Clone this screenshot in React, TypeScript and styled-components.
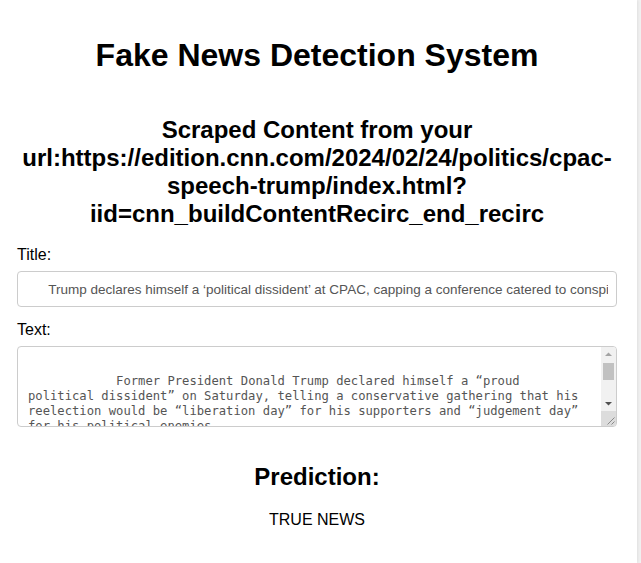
import React from "react";
import styled, { createGlobalStyle } from "styled-components";

const GlobalStyle = createGlobalStyle`
  html, body {
    margin: 0;
    padding: 0;
    background-color: #f1f1f1;
    font-family: "Liberation Sans", Arial, sans-serif;
  }
`;

const scrapedTitle =
  "      Trump declares himself a \u2018political dissident\u2019 at CPAC, capping a conference catered to conspiracy theories";

const scrapedText = [
  "",
  "            Former President Donald Trump declared himself a \u201cproud",
  "political dissident\u201d on Saturday, telling a conservative gathering that his",
  "reelection would be \u201cliberation day\u201d for his supporters and \u201cjudgement day\u201d",
  "for his political enemies.",
  "",
  "            \u201cI stand before you today not only as your past and",
  "future president, but as a proud political dissident,\u201d Trump said.",
  "",
  "            The speech capped a conference catered to conspiracy",
  "theories.",
].join("\n");

// the browser hides real scrollbars in the screenshot, so draw one over the textarea
const FakeScrollbar = () => (
  <>
    <STrack>
      <SArrowButton>
        <svg width="15" height="15" viewBox="0 0 15 15">
          <polygon points="4,9 11,9 7.5,5.5" fill="#a3a3a3" />
        </svg>
      </SArrowButton>
      <SThumb />
      <SSpacer />
      <SArrowButton>
        <svg width="15" height="15" viewBox="0 0 15 15">
          <polygon points="4,6 11,6 7.5,9.5" fill="#505050" />
        </svg>
      </SArrowButton>
    </STrack>
    <SCorner>
      <svg width="15" height="15" viewBox="0 0 15 15">
        <path d="M13.5 6.5 L6.5 13.5 M13.5 10.5 L10.5 13.5" stroke="#8a8a8a" strokeWidth="1" />
      </svg>
    </SCorner>
  </>
);

const App = () => {
  return (
    <SCard>
      <GlobalStyle />
      <SHeading>Fake News Detection System</SHeading>

      <SSubHeading>
        Scraped Content from your
        url:https://edition.cnn.com/2024/02/24/politics/cpac-speech-trump/index.html?iid=cnn_buildContentRecirc_end_recirc
      </SSubHeading>

      <SField>
        <SLabel htmlFor="title">Title:</SLabel>
        <SInput id="title" type="text" readOnly value={scrapedTitle} />
      </SField>

      <SField>
        <SLabel htmlFor="text">Text:</SLabel>
        <STextBox>
          <STextArea id="text" readOnly value={scrapedText} />
          <FakeScrollbar />
        </STextBox>
      </SField>

      <SResult>
        <SResultTitle>Prediction:</SResultTitle>
        <SResultValue>TRUE NEWS</SResultValue>
      </SResult>
    </SCard>
  );
};

const SCard = styled.div`
  width: 637px;
  min-height: 563px;
  box-sizing: border-box;
  padding: 16px 20px 1px 17px;
  background-color: #fff;
  box-shadow: 1px 0 3px rgba(0, 0, 0, 0.08);
  color: #000;
`;

const SHeading = styled.h1`
  margin: 21px 0;
  font-size: 32px;
  font-weight: bold;
  text-align: center;
`;

const SSubHeading = styled.h2`
  margin: 42px 0 18px;
  font-size: 24px;
  font-weight: bold;
  text-align: center;
  word-break: break-word;
`;

const SField = styled.div`
  display: flex;
  flex-direction: column;
  margin-bottom: 14px;
`;

const SLabel = styled.label`
  font-size: 16px;
  line-height: 18px;
  margin-bottom: 7px;
`;

const SInput = styled.input`
  box-sizing: border-box;
  width: 100%;
  height: 36px;
  padding: 8px;
  border: 1px solid #ccc;
  border-radius: 4px;
  font-family: "Liberation Sans", Arial, sans-serif;
  font-size: 13.5px;
  color: #555;
  background: #fff;
  outline: none;
`;

const STextBox = styled.div`
  position: relative;
  height: 81px;
`;

const STextArea = styled.textarea`
  display: block;
  box-sizing: border-box;
  width: 100%;
  height: 81px;
  padding: 12px 25px 2px 10px;
  border: 1px solid #ccc;
  border-radius: 4px;
  font-family: "DejaVu Sans Mono", "Liberation Mono", monospace;
  font-size: 12.2px;
  line-height: 15px;
  color: #555;
  background: #fff;
  white-space: pre-wrap;
  overflow: hidden;
  resize: none;
  outline: none;
`;

const STrack = styled.div`
  position: absolute;
  top: 1px;
  right: 1px;
  bottom: 16px;
  width: 15px;
  display: flex;
  flex-direction: column;
  background: #f1f1f1;
  border-top-right-radius: 3px;
`;

const SArrowButton = styled.div`
  width: 15px;
  height: 15px;
  flex: none;
  display: flex;

  svg {
    display: block;
  }
`;

const SThumb = styled.div`
  height: 17px;
  margin: 1px 2px 0;
  background: #c1c1c1;
  flex: none;
`;

const SSpacer = styled.div`
  flex: 1;
`;

const SCorner = styled.div`
  position: absolute;
  right: 1px;
  bottom: 1px;
  width: 15px;
  height: 15px;
  background: #dcdcdc;
  border-bottom-right-radius: 3px;

  svg {
    display: block;
  }
`;

const SResult = styled.div`
  margin-top: 36px;
  text-align: center;
`;

const SResultTitle = styled.h2`
  margin: 0 0 20px;
  font-size: 24px;
  font-weight: bold;
`;

const SResultValue = styled.p`
  margin: 0;
  font-size: 16px;
`;

export default App;
